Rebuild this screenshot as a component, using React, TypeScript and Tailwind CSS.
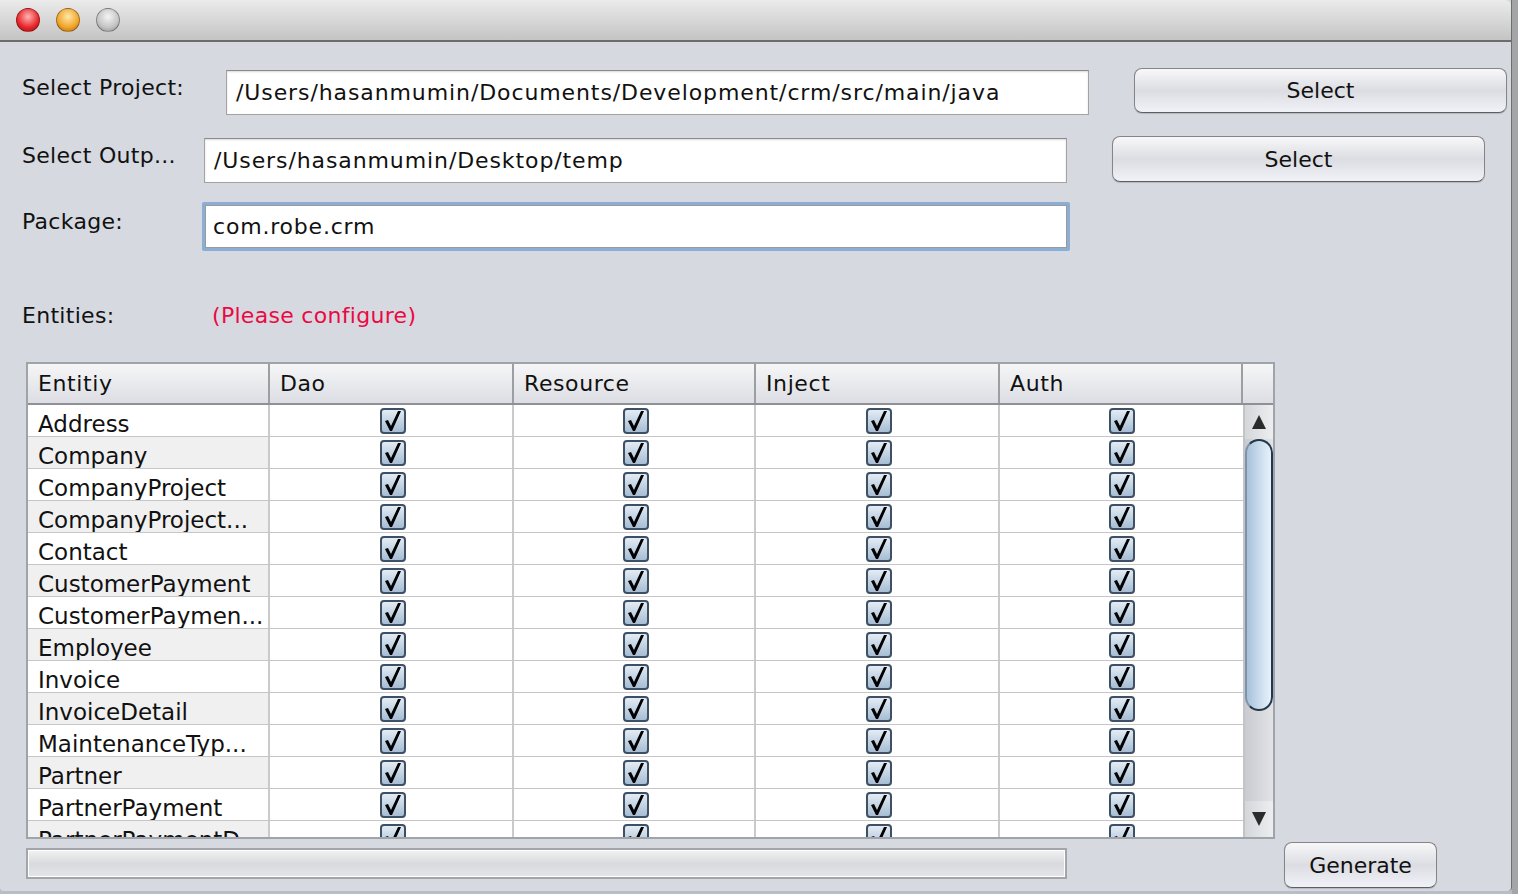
import React from 'react';

const rows = [
  'Address',
  'Company',
  'CompanyProject',
  'CompanyProject...',
  'Contact',
  'CustomerPayment',
  'CustomerPaymen...',
  'Employee',
  'Invoice',
  'InvoiceDetail',
  'MaintenanceTyp...',
  'Partner',
  'PartnerPayment',
  'PartnerPaymentD',
];

const colWidths = ['w-[242px]', 'w-[244px]', 'w-[242px]', 'w-[244px]', 'w-[243px]'];
const headers = ['Entitiy', 'Dao', 'Resource', 'Inject', 'Auth'];

function Check() {
  return (
    <div className="w-[26px] h-[26px] rounded-[4px] border-2 border-[#3e5064] bg-gradient-to-b from-[#e3ecf5] to-[#a6bdd3] flex items-center justify-center">
      <svg width="20" height="22" viewBox="0 0 20 22">
        <path d="M2 11 L5 10 L8 16 L15 1 L18 1 L9 21 L7 21 Z" fill="#000" />
      </svg>
    </div>
  );
}

function MacButton({ label, w, h }: { label: string; w: string; h: string }) {
  return (
    <div
      className={`${w} ${h} rounded-[8px] border border-[#858585] border-b-[#5e5e5e] bg-gradient-to-b from-[#f8f8fa] via-[#dcdde2] to-[#f0f2f7] flex items-center justify-center text-[22px] text-[#111] shadow-[0_1px_1px_rgba(0,0,0,0.15)]`}
    >
      {label}
    </div>
  );
}

function Light({ color }: { color: string }) {
  return <div className={`w-[24px] h-[24px] rounded-full border border-black/30 ${color}`} />;
}

export default function App() {
  return (
    <div className="w-[1518px] h-[894px] flex bg-[#b9bdc5] font-['DejaVu_Sans',_sans-serif] overflow-hidden">
      <div className="w-[1512px] h-[891px] flex flex-col bg-[#d6d9e0] border-r border-[#6e6e6e] rounded-b-[4px]">
        {/* title bar */}
        <div className="h-[42px] shrink-0 bg-gradient-to-b from-[#ebebeb] to-[#c4c4c4] border-b-2 border-[#6c6c6c] rounded-tr-[6px] flex items-center gap-[16px] pl-[16px]">
          <Light color="bg-[radial-gradient(circle_at_50%_35%,#ffb3b3,#e8262a_60%,#9e0c10)]" />
          <Light color="bg-[radial-gradient(circle_at_50%_35%,#ffe7a8,#f0a52a_60%,#a8650a)]" />
          <Light color="bg-[radial-gradient(circle_at_50%_35%,#f4f4f4,#c4c4c4_60%,#8a8a8a)]" />
        </div>

        <div className="flex flex-col pl-[22px] text-[22px] text-[#111]">
          {/* row 1 */}
          <div className="flex items-start mt-[26px]">
            <div className="w-[204px] mt-[7px] leading-[26px] tracking-[0.3px]">Select Project:</div>
            <div className="w-[863px] h-[45px] mt-[2px] bg-white border border-[#a3a3a3] border-t-[#8a8a8a] flex items-center pl-[9px] tracking-[0.9px] shadow-[inset_0_1px_2px_rgba(0,0,0,0.15)]">
              /Users/hasanmumin/Documents/Development/crm/src/main/java
            </div>
            <div className="ml-[45px]">
              <MacButton label="Select" w="w-[373px]" h="h-[45px]" />
            </div>
          </div>

          {/* row 2 */}
          <div className="flex items-start mt-[21px]">
            <div className="w-[182px] mt-[7px] leading-[26px] tracking-[0.3px]">Select Outp...</div>
            <div className="w-[863px] h-[45px] mt-[2px] bg-white border border-[#a3a3a3] border-t-[#8a8a8a] flex items-center pl-[9px] tracking-[0.9px] shadow-[inset_0_1px_2px_rgba(0,0,0,0.15)]">
              /Users/hasanmumin/Desktop/temp
            </div>
            <div className="ml-[45px]">
              <MacButton label="Select" w="w-[373px]" h="h-[46px]" />
            </div>
          </div>

          {/* row 3 */}
          <div className="flex items-start mt-[19px]">
            <div className="w-[180px] mt-[7px] leading-[26px] tracking-[0.3px]">Package:</div>
            <div className="w-[868px] h-[49px] border-[3px] border-[#8aaed6] rounded-[2px]">
              <div className="w-full h-full bg-white border border-[#9a9a9a] flex items-center pl-[7px] tracking-[0.8px]">com.robe.crm</div>
            </div>
          </div>

          {/* entities */}
          <div className="flex items-start mt-[52px] leading-[26px] tracking-[0.3px]">
            <div className="w-[190px]">Entities:</div>
            <div className="text-[#ea0a43]">(Please configure)</div>
          </div>

          {/* table */}
          <div className="ml-[4px] mt-[33px] w-[1249px] h-[477px] border-2 border-[#9fa3aa] flex flex-col bg-white">
            <div className="h-[41px] shrink-0 flex bg-gradient-to-b from-[#f6f6f7] to-[#dcdee4] border-b-2 border-[#8e9096] tracking-[0.6px]">
              {headers.map((h, i) => (
                <div key={h} className={`${colWidths[i]} h-full border-r-2 border-[#9c9ea3] flex items-center pl-[10px]`}>
                  {h}
                </div>
              ))}
              <div className="flex-1" />
            </div>
            <div className="flex-1 flex overflow-hidden">
              <div className="w-[1215px] overflow-hidden">
                {rows.map((r, idx) => (
                  <div key={r} className="h-[32px] flex border-b border-[#c6c6c6]">
                    <div className={`${colWidths[0]} h-full border-r-2 border-[#cacaca] flex items-center pl-[10px] pt-[7px] text-[23px] whitespace-nowrap overflow-hidden ${idx % 2 === 1 ? 'bg-[#f0f0f0]' : 'bg-white'}`}>
                      {r}
                    </div>
                    {[1, 2, 3, 4].map((c) => (
                      <div key={c} className={`${colWidths[c]} h-full ${c < 4 ? 'border-r-2 border-[#cacaca] pl-[4px]' : ''} flex items-center justify-center`}>
                        <Check />
                      </div>
                    ))}
                  </div>
                ))}
              </div>
              {/* scrollbar */}
              <div className="w-[30px] h-full border-l-2 border-[#c2c4c8] bg-gradient-to-r from-[#c9cbd0] to-[#e2e3e6] flex flex-col">
                <div className="h-[34px] shrink-0 bg-gradient-to-r from-[#d4d6da] to-[#eceef0] flex items-center justify-center">
                  <div className="w-0 h-0 border-l-[7px] border-r-[7px] border-b-[14px] border-l-transparent border-r-transparent border-b-[#2b2b2b]" />
                </div>
                <div className="h-[272px] shrink-0 rounded-[14px] border-2 border-[#243648] border-l-[#7f93a8] bg-gradient-to-r from-[#a7c1da] via-[#c8dbec] to-[#e6f2fb]" />
                <div className="flex-1" />
                <div className="h-[36px] shrink-0 bg-gradient-to-r from-[#d4d6da] to-[#eceef0] flex items-center justify-center">
                  <div className="w-0 h-0 border-l-[7px] border-r-[7px] border-t-[14px] border-l-transparent border-r-transparent border-t-[#2b2b2b]" />
                </div>
              </div>
            </div>
          </div>

          {/* bottom */}
          <div className="flex items-start mt-[3px]">
            <div className="ml-[4px] mt-[6px] w-[1041px] h-[31px] border-2 border-[#a2a5aa] bg-gradient-to-b from-[#f2f2f4] via-[#d9dadd] to-[#e4e5e8] shadow-[inset_0_0_0_1px_#ffffff]" />
            <div className="ml-[217px]">
              <MacButton label="Generate" w="w-[153px]" h="h-[46px]" />
            </div>
          </div>
        </div>
      </div>
      <div className="flex-1 bg-[#a3a5a9]" />
    </div>
  );
}
